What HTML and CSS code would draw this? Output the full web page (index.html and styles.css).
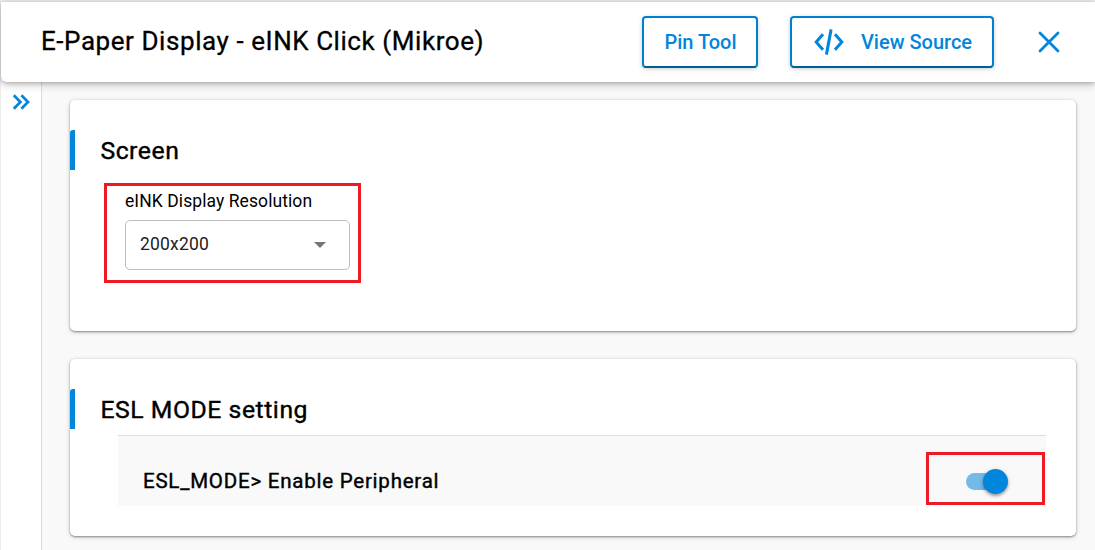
FILE: index.html
```
<!DOCTYPE html>
<html lang="en">
<head>
<meta charset="utf-8">
<title>E-Paper Display - eINK Click (Mikroe)</title>
<link rel="stylesheet" href="styles.css">
</head>
<body>
<div class="app">
  <header class="header">
    <h1 class="title">E-Paper Display - eINK Click (Mikroe)</h1>
    <button class="btn btn-pin"><span class="btn-text">Pin Tool</span></button>
    <button class="btn btn-source">
      <svg class="code-icon" width="30" height="26" viewBox="0 0 30 26" fill="none" stroke="currentColor" stroke-width="3"><path d="M9 5.3 2.2 13 9 20.7M21 5.3 27.8 13 21 20.7"/><path d="M17.1.4 12.4 25.6" stroke-width="3"/></svg>
      <span class="btn-text">View Source</span>
    </button>
    <button class="close" aria-label="Close">
      <svg width="22" height="22" viewBox="0 0 22 22" fill="none" stroke="currentColor" stroke-width="2.8" stroke-linecap="round"><path d="M2 2 20 20M20 2 2 20"/></svg>
    </button>
  </header>
  <div class="body">
    <aside class="rail">
      <svg width="18" height="16" viewBox="0 0 18 16" fill="none" stroke="currentColor" stroke-width="2.7"><path d="M1.8 1.2 8.4 8 1.8 14.8M9.4 1.2 16 8 9.4 14.8"/></svg>
    </aside>
    <main class="content">
      <section class="card card-screen">
        <h2 class="card-title">Screen</h2>
        <div class="field">
          <div class="label">eINK Display Resolution</div>
          <div class="select"><span class="value">200x200</span><span class="arrow"></span></div>
        </div>
      </section>
      <section class="card card-esl">
        <h2 class="card-title">ESL MODE setting</h2>
        <div class="row">
          <span class="row-text">ESL_MODE&gt; Enable Peripheral</span>
          <div class="marker"><span class="track"><span class="thumb"></span></span></div>
        </div>
      </section>
    </main>
  </div>
</div>
</body>
</html>
```
FILE: styles.css
```
* { box-sizing: border-box; }
body { margin: 0; font-family: Roboto, sans-serif; color: #000; background: #ececec; overflow: hidden; }
h1, h2 { margin: 0; font-weight: 500; }
button { font: inherit; background: #fff; padding: 0; color: #0086dc; }
.app { height: 550px; padding: 2px 0 0 1px; display: flex; flex-direction: column; }
.header {
  position: relative; z-index: 1; height: 80px; flex: none; display: flex; align-items: center;
  padding-left: 40px; background: #fff; border-radius: 0 0 0 6px;
  box-shadow: 0 3px 8px rgba(0,0,0,.2), 0 1px 4px rgba(0,0,0,.2);
}
.title { flex: 0 0 601px; font-size: 26px; line-height: 30px; padding-bottom: 2px; font-weight: 400; letter-spacing: .56px; white-space: nowrap; -webkit-text-stroke: .3px; }
.btn {
  height: 52px; display: flex; align-items: center; justify-content: center;
  border: 2px solid #0081d0; border-bottom-color: #005e98; border-radius: 4px;
  font-size: 20px; font-weight: 500; white-space: nowrap; box-shadow: 0 1px 4px rgba(0,0,0,.2);
}
.btn-pin { width: 116px; margin-right: 32px; padding-left: 1px; }
.btn-source { width: 204px; gap: 17px; padding-left: 2px; }
.close { border: 0; margin-left: 44px; display: flex; }
.body { flex: 1; min-height: 0; display: flex; margin-top: -6px; }
.rail { width: 41px; border-right: 1px solid #dcdcdc; background: #fff; padding: 18px 0 0 11px; color: #0086dc; }
.content { flex: 1; display: flex; flex-direction: column; gap: 28px; padding: 24px 19px 0 28px; background: #f9f9f9; }
.card {
  flex: none; background: #fff; border-radius: 5px; padding-top: 30px;
  box-shadow: 0 1px 2px rgba(0,0,0,.38), 0 1px 5px rgba(0,0,0,.18);
}
.card-screen { height: 231px; }
.card-esl { height: 177px; }
.card-title { height: 40px; border-left: 5px solid #0086dc; border-top-left-radius: 3px; padding-left: 25.4px; font-size: 24.75px; line-height: 41px; font-weight: 400; letter-spacing: .54px; -webkit-text-stroke: .4px; white-space: nowrap; }
.field { width: 257px; height: 100px; margin: 13px 0 0 34px; border: 3px solid #ed1c24; padding: 4px 8px 0 18px; }
.label { height: 30px; font-size: 17.5px; line-height: 22px; letter-spacing: .08px; white-space: nowrap; }
.select { height: 50px; display: flex; align-items: center; justify-content: space-between; border: 1px solid #bdbdbd; border-radius: 5px; padding: 0 23px 2px 14px; color: #212121; }
.value { font-size: 17.5px; letter-spacing: .2px; }
.arrow { border: 6.5px solid transparent; border-top: 6.5px solid #757575; border-bottom: 0; margin-top: 2px; }
.row { height: 71px; margin: 6px 30px 0 48px; border-top: 1px solid #dfdfdf; background: #f9f9f9; display: flex; justify-content: space-between; padding: 16px 1px 0 25px; }
.row-text { font-size: 20.5px; line-height: 58px; font-weight: 400; letter-spacing: .77px; -webkit-text-stroke: .4px; white-space: nowrap; }
.marker { width: 119px; height: 53px; border: 3px solid #ed1c24; display: flex; align-items: center; padding: 5px 0 0 37px; }
.track { width: 40px; height: 17px; border-radius: 9px; background: #73bae8; display: flex; align-items: center; justify-content: flex-end; }
.thumb { width: 25px; height: 25px; flex: none; margin-right: -2px; border-radius: 50%; background: #0086dc; box-shadow: 0 2px 3px rgba(0,0,0,.3), 0 1px 5px rgba(0,0,0,.15); }
```
